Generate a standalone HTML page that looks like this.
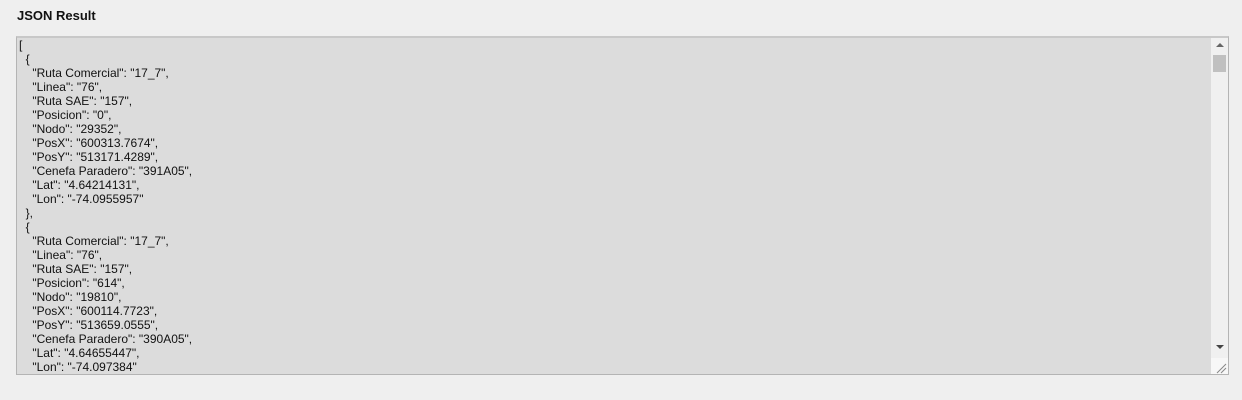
<!DOCTYPE html>
<html><head><style>
body{margin:0;background:#efefef;width:1242px;height:400px;overflow:hidden;font-family:"Liberation Sans",Arial,sans-serif;}
h3{position:absolute;left:17px;top:8px;margin:0;font-size:13px;font-weight:bold;color:#111;}
.box{position:absolute;left:16px;top:36px;width:1211px;height:336px;border:1px solid #b4b4b4;border-top:2px solid #c8c8c8;background:#dcdcdc;overflow:hidden;}
pre{margin:0;padding:0 0 0 2px;font-family:"Liberation Sans",Arial,sans-serif;font-size:12px;line-height:14px;color:#111;}
.sb{position:absolute;right:0;top:0;width:17px;height:100%;background:#f0f0f0;}
.th{position:absolute;left:2px;top:17px;width:13px;height:17px;background:#c0c0c0;}
.up{position:absolute;left:5px;top:5px;border-left:4px solid transparent;border-right:4px solid transparent;border-bottom:4px solid #666;}
.dn{position:absolute;left:5px;top:307px;border-left:4px solid transparent;border-right:4px solid transparent;border-top:4px solid #444;}
.rz{position:absolute;left:0;top:320px;width:17px;height:17px;background:#f7f7f7;}
</style></head><body>
<h3>JSON Result</h3>
<div class="box"><pre>[
  {
    "Ruta Comercial": "17_7",
    "Linea": "76",
    "Ruta SAE": "157",
    "Posicion": "0",
    "Nodo": "29352",
    "PosX": "600313.7674",
    "PosY": "513171.4289",
    "Cenefa Paradero": "391A05",
    "Lat": "4.64214131",
    "Lon": "-74.0955957"
  },
  {
    "Ruta Comercial": "17_7",
    "Linea": "76",
    "Ruta SAE": "157",
    "Posicion": "614",
    "Nodo": "19810",
    "PosX": "600114.7723",
    "PosY": "513659.0555",
    "Cenefa Paradero": "390A05",
    "Lat": "4.64655447",
    "Lon": "-74.097384"
  },</pre>
<div class="sb"><div class="up"></div><div class="th"></div><div class="dn"></div><div class="rz"><svg width="17" height="17"><path d="M6 15L15 6M10 15L15 10" stroke="#888" stroke-width="1"/></svg></div></div>
</div>
</body></html>
